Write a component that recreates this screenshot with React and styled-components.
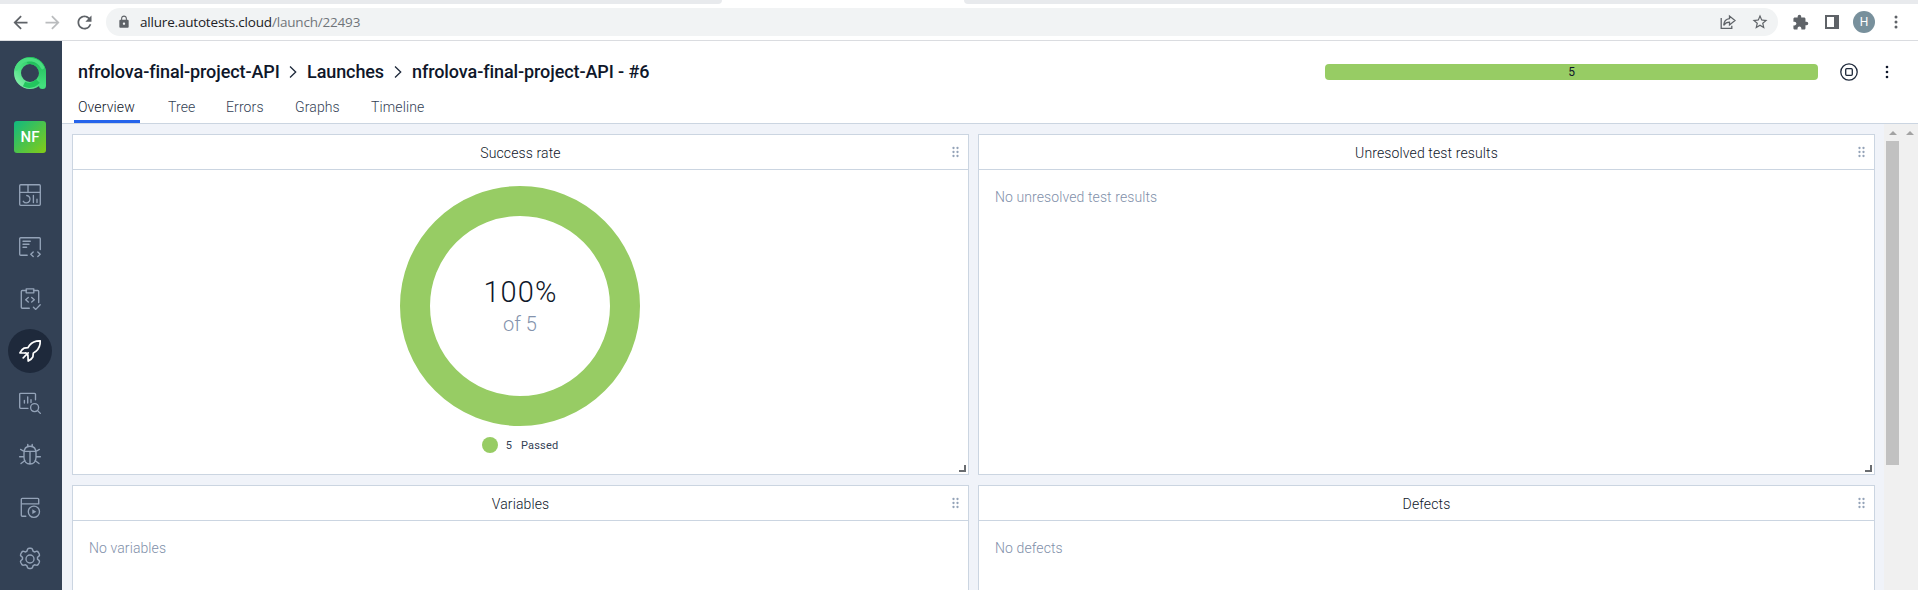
import React from 'react';
import styled, { createGlobalStyle } from 'styled-components';
import { MdLock, MdStarBorder, MdExtension, MdRefresh, MdArrowBack, MdArrowForward } from 'react-icons/md';

const Global = createGlobalStyle`
  * { box-sizing: border-box; }
  html, body, #root { margin: 0; height: 100%; }
  body { font-family: Roboto, "Liberation Sans", sans-serif; background: #fff; overflow: hidden; color: #0f172a; }
`;

const Window = styled.div`
  height: 590px;
  display: flex;
  flex-direction: column;
  overflow: hidden;
`;
const TabStrip = styled.div`
  height: 4px;
  flex: none;
  display: flex;
  gap: 242px;
`;
const InactiveTabs = styled.div`
  ${(p) => (p.$w ? `width: ${p.$w}px;` : 'flex: 1;')}
  background: #e8eaed;
  border-radius: ${(p) => (p.$w ? '0 0 6px 0' : '0 0 0 6px')};
`;
const Toolbar = styled.div`
  height: 37px;
  flex: none;
  border-bottom: 1px solid #dadce0;
  display: flex;
  align-items: center;
  padding: 0 6px 0 4px;
`;
const ToolIcon = styled.div`
  width: 32px;
  height: 32px;
  flex: none;
  display: flex;
  align-items: center;
  justify-content: center;
  color: ${(p) => (p.$dim ? '#babcbe' : '#5f6368')};
`;
const Address = styled.div`
  flex: 1;
  height: 28px;
  border-radius: 14px;
  background: #f1f3f4;
  display: flex;
  align-items: center;
  padding: 0 2px 0 11px;
  margin: 0 6px;
  color: #5f6368;
`;
const Url = styled.div`
  flex: 1;
  margin-left: 9px;
  font: 13.5px/20px "Open Sans", "Noto Sans", sans-serif;
  letter-spacing: -0.19px;
  color: #70757a;
  white-space: nowrap;
`;
const Host = styled.span`
  color: #202124;
`;
const Avatar = styled.div`
  width: 22px;
  height: 22px;
  border-radius: 50%;
  background: #78909c;
  color: #fff;
  font-size: 12px;
  line-height: 22px;
  text-align: center;
`;

const Body = styled.div`
  flex: 1;
  min-height: 0;
  display: flex;
`;
const Sidebar = styled.nav`
  width: 62px;
  flex: none;
  background: #334155;
  display: flex;
  flex-direction: column;
  align-items: center;
  padding: 16px 2px 0 0;
`;
const Project = styled.div`
  width: 32px;
  height: 32px;
  flex: none;
  margin: 32px 0 20px;
  border-radius: 3px;
  background: linear-gradient(135deg, #10b981, #84cc16);
  color: #fff;
  font-size: 15px;
  font-weight: 500;
  line-height: 33px;
  text-align: center;
`;
const NavItem = styled.div`
  width: 44px;
  height: 44px;
  flex: none;
  margin-bottom: 8px;
  border-radius: 50%;
  display: flex;
  align-items: center;
  justify-content: center;
  background: ${(p) => (p.$active ? '#1e293b' : 'transparent')};
  color: ${(p) => (p.$active ? '#fff' : '#94a3b8')};
`;
const Main = styled.main`
  flex: 1;
  min-width: 0;
  display: flex;
  flex-direction: column;
`;
const Header = styled.header`
  height: 83px;
  flex: none;
  border-bottom: 1px solid #cbd5e1;
  display: flex;
  flex-direction: column;
  justify-content: space-between;
`;
const TitleRow = styled.div`
  height: 62px;
  display: flex;
  align-items: center;
  padding: 0 29px 0 16px;
`;
const Crumb = styled.span`
  font-size: 18px;
  font-weight: 500;
  line-height: 24px;
  white-space: nowrap;
  letter-spacing: -0.09px;
  width: ${(p) => p.$w}px;
`;
const Separator = styled.svg`
  width: 8px;
  height: 14px;
  flex: none;
  margin: 0 10px 0 11px;
`;
const Progress = styled.div`
  width: 493px;
  height: 16px;
  margin-left: auto;
  margin-right: 20px;
  border-radius: 4px;
  background: #97cc64;
  font-size: 12px;
  line-height: 16px;
  text-align: center;
`;
const Action = styled.div`
  display: flex;
  width: ${(p) => p.$w}px;
  justify-content: center;
  margin-right: ${(p) => p.$gap || 0}px;
`;
const Tabs = styled.div`
  height: 31px;
  margin-top: -11px;
  display: flex;
  gap: 24px;
  padding-left: 12px;
`;
const Tab = styled.div`
  width: ${(p) => p.$w}px;
  padding: 5px 0 0 4px;
  font-size: 14px;
  font-weight: 300;
  line-height: 20px;
  letter-spacing: 0.12px;
  white-space: nowrap;
  color: ${(p) => (p.$active ? '#0f172a' : '#334155')};
  border-bottom: 3px solid ${(p) => (p.$active ? '#2563eb' : 'transparent')};
`;
const Content = styled.div`
  flex: 1;
  min-height: 0;
  display: flex;
  background: #f0f3f9;
`;
const Board = styled.div`
  flex: 1;
  display: grid;
  grid-template-columns: 897px 897px;
  grid-template-rows: 341px 341px;
  gap: 10px 9px;
  padding: 10px 0 0 10px;
  overflow: hidden;
`;
const Card = styled.section`
  background: #fff;
  border: 1px solid #cbd5e1;
  display: flex;
  flex-direction: column;
`;
const CardHead = styled.div`
  height: 35px;
  flex: none;
  border-bottom: 1px solid #cbd5e1;
  display: grid;
  grid-template-columns: 1fr auto 1fr;
  align-items: center;
  padding: 0 9px;
`;
const CardTitle = styled.h2`
  grid-column: 2;
  margin: 0;
  padding-top: 1px;
  font-size: 14px;
  line-height: 20px;
  font-weight: 300;
  letter-spacing: 0.12px;
  color: #0f172a;
`;
const Grip = styled.svg`
  justify-self: end;
  width: 7px;
  height: 12px;
`;
const CardBody = styled.div`
  flex: 1;
  display: flex;
  flex-direction: column;
  padding: 16px 17px 0 16px;
`;
const Empty = styled.div`
  padding-top: 1px;
  font-size: 14px;
  font-weight: 300;
  line-height: 20px;
  color: #7f8fa9;
  letter-spacing: 0.1px;
`;
const Corner = styled.div`
  width: 7px;
  height: 7px;
  flex: none;
  align-self: flex-end;
  margin: 0 2px 2px 0;
  border-right: 2px solid #696c70;
  border-bottom: 2px solid #696c70;
`;
const Donut = styled.div`
  width: 240px;
  height: 240px;
  flex: none;
  align-self: center;
  border: 30px solid #97cc64;
  border-radius: 50%;
  display: flex;
  flex-direction: column;
  align-items: center;
  padding-top: 58px;
`;
const Percent = styled.div`
  font-size: 29px;
  line-height: 36px;
  font-weight: 300;
  letter-spacing: 1.1px;
  padding-left: 1px;
  color: #0f172a;
`;
const Total = styled.div`
  font-size: 20px;
  font-weight: 300;
  line-height: 28px;
  color: #8493ad;
`;
const Legend = styled.div`
  display: flex;
  align-items: center;
  align-self: center;
  margin-top: 11px;
  height: 16px;
  font-size: 11px;
  letter-spacing: 0.15px;
  color: #334155;
`;
const Dot = styled.span`
  width: 16px;
  height: 16px;
  border-radius: 50%;
  background: #97cc64;
  margin-right: 8px;
`;
const LegendLabel = styled.span`
  margin-left: 9px;
`;
const Rail = styled.div`
  width: 17px;
  background: #f0f0f0;
  display: flex;
  flex-direction: column;
  align-items: center;
  padding-top: 7px;
`;
const Thumb = styled.div`
  width: 13px;
  height: 324px;
  margin-top: 6px;
  background: #c1c1c1;
`;

const Line = ({ children }) => (
  <svg width="24" height="24" viewBox="0 0 24 24" fill="none" stroke="currentColor" strokeWidth="1.35" strokeLinecap="round" strokeLinejoin="round">
    {children}
  </svg>
);

const navIcons = [
  <Line key="dash"><rect x="1.7" y="1.7" width="20.6" height="20.6" rx="1" /><path d="M1.7 9.3h20.6M10 1.7v7.6M8.8 12.5a3.7 3.7 0 1 1-3.5 5.8M15.4 12.5v7M19 16.2v3.3" /></Line>,
  <Line key="cases"><path d="M9.2 20.2H2.7a1 1 0 0 1-1-1V3.7a1 1 0 0 1 1-1h18.6a1 1 0 0 1 1 1v10.8M5 6.2h7.3M5 9.2h6M5 12.2h3.6M15.2 17l-2.4 2.3 2.4 2.3M19.8 17l2.4 2.3-2.4 2.3" /></Line>,
  <Line key="plans"><path d="M8.5 3.5H4.3a1 1 0 0 0-1 1v15.7a1 1 0 0 0 1 1h7M15.5 3.5h4.2a1 1 0 0 1 1 1v11M8.2 1.8h7.6v4H8.2zM10.3 10.5l-2.6 2.3 2.6 2.3M13.7 10.5l2.6 2.3-2.6 2.3M15.4 20.2l2.4 2.2 4.4-4.6" /></Line>,
  <Line key="rocket"><path d="M22.2 1.8c-4.7-.2-8.1 1.3-10.5 4.3L9.9 8.7l-3.8.4c-1.7.7-2.9 2.4-4.2 4.7l4.9.2M22.2 1.8c.2 4.7-1.3 8.1-4.3 10.5l-2.6 1.8-.4 3.8c-.7 1.7-2.4 2.9-4.7 4.2l-.3-6.3M6.8 14c1.3-.5 3.4.9 3.1 3.1M6.9 17.1l3.3-3.3M5.2 18.8l1-1" strokeWidth="1.7" /></Line>,
  <Line key="search"><path d="M10 17.3H2.7a1 1 0 0 1-1-1v-13a1 1 0 0 1 1-1h13.8a1 1 0 0 1 1 1v5.4M6.4 9.4v2.7M9.7 5.8v6.3M13 8.7v2.8" /><circle cx="16.6" cy="16.6" r="4" /><path d="M19.6 19.6l2.7 2.8" /></Line>,
  <Line key="bug"><path d="M6 10c0-4.500 2.300-6.800 6-6.800s6 2.300 6 6.800v4.500c0 4-2.500 6.500-6 6.500s-6-2.500-6-6.500zM6.100 8.300h11.800M12 8.300V21M9.800 3.200V1.300M14.200 3.200V1.300M6 13.700H1.600M18 13.700h4.400M6.100 8.500L2.600 6.400M17.900 8.500l3.500-2.100M7 17.500l-4 3M17 17.500l4 3" /></Line>,
  <Line key="jobs"><path d="M7.8 21.2H4.3a1 1 0 0 1-1-1V4.3a1 1 0 0 1 1-1h15.4a1 1 0 0 1 1 1v4.600H3.300" /><circle cx="15.9" cy="16.7" r="5.600" /><path d="M14.3 14.3v4.800l4-2.400z" fill="currentColor" stroke="none" /></Line>,
  <Line key="gear"><path d="M9.600 2.600c.3-.9.7-1.200 1.500-1.200h1.800c.8 0 1.200.3 1.500 1.200l.5 1.500 1.200.6 1.600-.5c.8-.2 1.400 0 1.900.8l.9 1.600c.4.8.4 1.300-.3 1.900l-1.300 1.100v1.800l1.300 1.100c.7.6.7 1.100.3 1.900l-.9 1.600c-.5.8-1.100 1-1.900.8l-1.600-.3-1.200.7-.5 1.500c-.3.9-.7 1.200-1.500 1.200h-1.800c-.8 0-1.200-.3-1.500-1.200l-.5-1.500-1.200-.7-1.600.3c-.8.2-1.400 0-1.900-.8l-.9-1.600c-.4-.8-.4-1.300.3-1.900l1.300-1.100v-1.800L3.800 8.500c-.7-.6-.7-1.100-.3-1.900L4.400 5c.5-.8 1.100-1 1.900-.8l1.600.5 1.200-.6z" transform="translate(0 .8) translate(12 11) scale(1.090) translate(-12 -11)" /><circle cx="12" cy="12" r="4" /></Line>,
];

const Logo = () => (
  <svg width="32" height="32" viewBox="0 0 32 32">
    <defs>
      <linearGradient id="ring" x1="0" y1="1" x2="1" y2="0">
        <stop offset="0" stopColor="#86efac" />
        <stop offset=".4" stopColor="#4ade80" />
        <stop offset="1" stopColor="#22c55e" />
      </linearGradient>
      <linearGradient id="stem" x1="0" y1="0" x2="0" y2="1">
        <stop offset="0" stopColor="#1fbd59" />
        <stop offset="1" stopColor="#43df7d" />
      </linearGradient>
    </defs>
    <circle cx="16" cy="16" r="12.5" fill="none" stroke="url(#ring)" strokeWidth="7" />
    <path d="M16 3.500A12.500 12.500 0 0 1 28.500 16V28.500" fill="none" stroke="url(#stem)" strokeWidth="7" strokeLinecap="round" />
    <path d="M2.500 12C5 5 11 1.800 18 2.800c5 .8 8.500 3.700 10.500 7.700" fill="none" stroke="#4ade80" strokeWidth="3.600" strokeLinecap="round" />
    <path d="M10 27c5 2.500 10 1.200 14-3" fill="none" stroke="#22c55e" strokeWidth="5" />
  </svg>
);

const Chevron = () => (
  <Separator viewBox="0 0 8 14" fill="none" stroke="#1e293b" strokeWidth="1.300">
    <path d="M1 1.500L6.700 7 1 12.500" />
  </Separator>
);

const Kebab = ({ r = 1.5, gap = 5, color = 'currentColor' }) => (
  <svg width="4" height="16" viewBox="0 0 4 16" fill={color}>
    <circle cx="2" cy={8 - gap} r={r} /><circle cx="2" cy="8" r={r} /><circle cx="2" cy={8 + gap} r={r} />
  </svg>
);

const Widget = ({ title, children }) => (
  <Card>
    <CardHead>
      <CardTitle>{title}</CardTitle>
      <Grip viewBox="0 0 7 12" fill="#94a3b8">
        {[2, 6, 10].map((y) => (
          <React.Fragment key={y}>
            <circle cx="1.5" cy={y} r="1.15" /><circle cx="5.5" cy={y} r="1.15" />
          </React.Fragment>
        ))}
      </Grip>
    </CardHead>
    <CardBody>{children}</CardBody>
    <Corner />
  </Card>
);

const ScrollArrow = () => (
  <svg width="8" height="4" viewBox="0 0 8 4"><path d="M0 4L4 0l4 4z" fill="#a3a3a3" /></svg>
);

export default function App() {
  return (
    <Window>
      <Global />
      <TabStrip><InactiveTabs $w={722} /><InactiveTabs /></TabStrip>
      <Toolbar>
        <ToolIcon><MdArrowBack size={21} /></ToolIcon>
        <ToolIcon $dim><MdArrowForward size={21} /></ToolIcon>
        <ToolIcon><MdRefresh size={21} /></ToolIcon>
        <Address>
          <MdLock size={14} />
          <Url><Host>allure.autotests.cloud</Host>/launch/22493</Url>
          <ToolIcon>
            <svg width="16" height="16" viewBox="0 0 16 16" fill="none" stroke="currentColor" strokeWidth="1.300">
              <path d="M1.200 4v10.300h10.600v-2.500M9.500 2v2.700C6 5 4 7.300 3.700 11.300 5.200 9 7 8.200 9.500 8.200v2.700L15 6.500z" />
            </svg>
          </ToolIcon>
          <ToolIcon><MdStarBorder size={18} /></ToolIcon>
        </Address>
        <ToolIcon><MdExtension size={17} /></ToolIcon>
        <ToolIcon>
          <svg width="14" height="14" viewBox="0 0 14 14"><path d="M0 0h14v14H0zM2 2v10h7V2z" fill="currentColor" fillRule="evenodd" /></svg>
        </ToolIcon>
        <ToolIcon><Avatar>H</Avatar></ToolIcon>
        <ToolIcon><Kebab /></ToolIcon>
      </Toolbar>
      <Body>
        <Sidebar>
          <Logo />
          <Project>NF</Project>
          {navIcons.map((icon, i) => <NavItem key={i} $active={i === 3}>{icon}</NavItem>)}
        </Sidebar>
        <Main>
          <Header>
            <TitleRow>
              <Crumb $w={200}>nfrolova-final-project-API</Crumb>
              <Chevron />
              <Crumb $w={76}>Launches</Crumb>
              <Chevron />
              <Crumb $w={240}>nfrolova-final-project-API - #6</Crumb>
              <Progress>5</Progress>
              <Action $w={22} $gap={25}>
                <svg width="18" height="18" viewBox="0 0 18 18" fill="none" stroke="#1e293b" strokeWidth="1.300">
                  <circle cx="9" cy="9" r="8.200" /><rect x="5.700" y="5.700" width="6.600" height="6.600" rx="1" />
                </svg>
              </Action>
              <Action $w={4}><Kebab r={1.3} color="#0f172a" /></Action>
            </TitleRow>
            <Tabs>
              <Tab $w={66} $active>Overview</Tab>
              <Tab $w={34}>Tree</Tab>
              <Tab $w={45}>Errors</Tab>
              <Tab $w={52}>Graphs</Tab>
              <Tab $w={61}>Timeline</Tab>
            </Tabs>
          </Header>
          <Content>
            <Board>
              <Widget title="Success rate">
                <Donut>
                  <Percent>100%</Percent>
                  <Total>of 5</Total>
                </Donut>
                <Legend><Dot />5<LegendLabel>Passed</LegendLabel></Legend>
              </Widget>
              <Widget title="Unresolved test results"><Empty>No unresolved test results</Empty></Widget>
              <Widget title="Variables"><Empty>No variables</Empty></Widget>
              <Widget title="Defects"><Empty>No defects</Empty></Widget>
            </Board>
            <Rail><ScrollArrow /><Thumb /></Rail>
            <Rail><ScrollArrow /></Rail>
          </Content>
        </Main>
      </Body>
    </Window>
  );
}
